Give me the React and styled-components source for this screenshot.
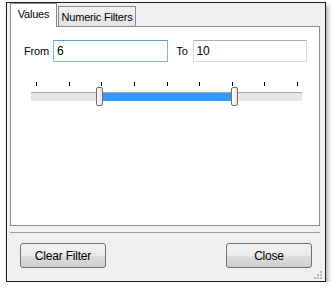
import React from "react";
import styled, { createGlobalStyle } from "styled-components";

const GlobalStyle = createGlobalStyle`
  body {
    margin: 0;
    background: #ffffff;
    font-family: "Liberation Sans", Arial, sans-serif;
  }
`;

const Page = styled.div`
  padding: 2px 0 0 6px;
`;

const Window = styled.div`
  position: relative;
  box-sizing: border-box;
  width: 320px;
  height: 280px;
  border: 1px solid #1f1f1f;
  background: #f0f0f0;
  box-shadow: 2px 3px 5px rgba(0, 0, 0, 0.35);
  display: flex;
  flex-direction: column;
  padding: 1px 5px 0 3px;
  font-size: 11px;
  letter-spacing: -0.2px;
  color: #000;
`;

const TabStrip = styled.div`
  display: flex;
  align-items: flex-end;
  height: 23px;
  margin-bottom: -1px;
  position: relative;
  z-index: 1;
`;

const Tab = styled.div`
  box-sizing: border-box;
  border: 1px solid #898c95;
  border-bottom: none;
  display: flex;
  align-items: center;
  justify-content: center;
  height: ${p => (p.$active ? "24px" : "20px")};
  width: ${p => p.$width}px;
  padding-bottom: ${p => (p.$active ? "3px" : "0")};
  background: ${p => (p.$active ? "#ffffff" : "linear-gradient(#f2f2f2, #e3e3e3)")};
  margin-left: ${p => (p.$active ? "0" : "1px")};
  margin-bottom: ${p => (p.$active ? "0" : "1px")};
`;

const Panel = styled.div`
  box-sizing: border-box;
  width: 310px;
  height: 200px;
  border: 1px solid #898c95;
  background: #ffffff;
  padding: 13px 12px 0 13px;
`;

const RangeRow = styled.div`
  display: flex;
  align-items: center;
`;

const Label = styled.span`
  margin-right: ${p => p.$gap}px;
`;

const Field = styled.div`
  box-sizing: border-box;
  width: ${p => p.$width}px;
  height: 22px;
  border: 1px solid ${p => (p.$focused ? "#7eb4ea" : "#d5dbe1")};
  border-top-color: ${p => (p.$focused ? "#569de5" : "#abadb3")};
  display: flex;
  align-items: center;
  padding-left: 3px;
  font-size: 12px;
  margin-right: ${p => p.$after || 0}px;
`;

const Slider = styled.div`
  margin: 20px 0 0 7px;
  width: 271px;
  position: relative;
`;

const Ticks = styled.div`
  display: flex;
  justify-content: space-between;
  padding: 0 4px 0 5px;
  height: 4px;
`;

const Tick = styled.div`
  width: 1px;
  height: 4px;
  background: #000;
`;

const Track = styled.div`
  margin-top: 6px;
  height: 9px;
  box-sizing: border-box;
  border-top: 1px solid #a6a6a6;
  background: #e6e8e8;
  position: relative;
`;

const Fill = styled.div`
  position: absolute;
  top: 0;
  bottom: 0;
  background: #3399ff;
`;

const Thumb = styled.div`
  position: absolute;
  top: -6px;
  width: 7px;
  height: 19px;
  box-sizing: border-box;
  border: 1px solid #707070;
  border-radius: 2px;
  background: linear-gradient(90deg, #fdfdfd, #e4e4e4);
`;

const Separator = styled.div`
  margin: 6px 0 0 0;
  height: 1px;
  background: #a0a0a0;
  width: 310px;
`;

const Footer = styled.div`
  display: flex;
  justify-content: space-between;
  padding: 10px 8px 0 10px;
`;

const Button = styled.div`
  box-sizing: border-box;
  width: 86px;
  height: 25px;
  border: 1px solid #707070;
  border-radius: 3px;
  background: linear-gradient(#f2f2f2 0%, #ebebeb 50%, #dddddd 51%, #cfcfcf 100%);
  display: flex;
  align-items: center;
  justify-content: center;
  font-size: 12px;
`;

const Grip = styled.svg`
  position: absolute;
  right: 3px;
  bottom: 2px;
`;

export default function App() {
  const lo = 99 - 31 - 3;
  const hi = 234 - 31 - 3;
  return (
    <Page>
      <GlobalStyle />
      <Window>
        <TabStrip>
          <Tab $active $width={47}>Values</Tab>
          <Tab $width={78}>Numeric Filters</Tab>
        </TabStrip>
        <Panel>
          <RangeRow>
            <Label $gap={4}>From</Label>
            <Field $width={116} $focused $after={8}>6</Field>
            <Label $gap={5}>To</Label>
            <Field $width={115}>10</Field>
          </RangeRow>
          <Slider>
            <Ticks>
              {Array.from({ length: 9 }).map((_, i) => (
                <Tick key={i} />
              ))}
            </Ticks>
            <Track>
              <Fill style={{ left: lo + 3, width: hi - lo }} />
              <Thumb style={{ left: lo }} />
              <Thumb style={{ left: hi }} />
            </Track>
          </Slider>
        </Panel>
        <Separator />
        <Footer>
          <Button>Clear Filter</Button>
          <Button>Close</Button>
        </Footer>
        <Grip width="8" height="8" viewBox="0 0 8 8">
          {[[6, 0], [6, 3], [3, 3], [6, 6], [3, 6], [0, 6]].map(([x, y], i) => (
            <rect key={i} x={x} y={y} width="2" height="2" fill="#b8b8b8" />
          ))}
        </Grip>
      </Window>
    </Page>
  );
}
